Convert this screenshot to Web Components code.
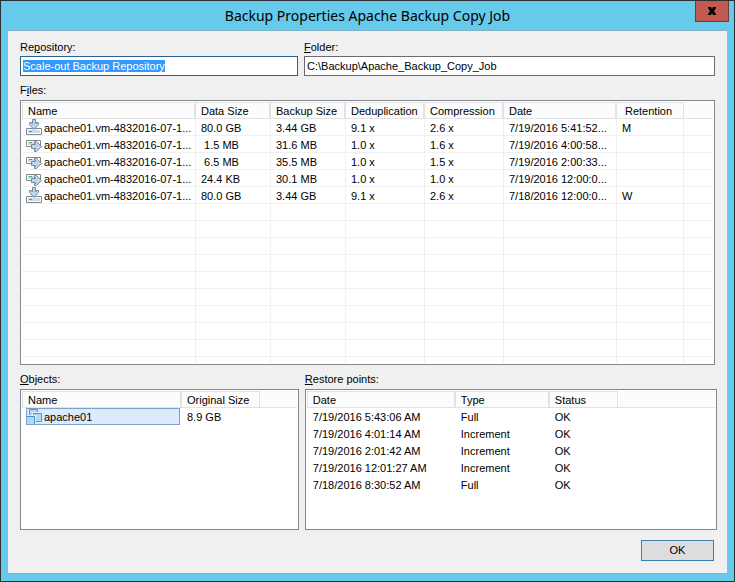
<!DOCTYPE html>
<html lang="en">
<head>
<meta charset="utf-8">
<title>Backup Properties Apache Backup Copy Job</title>
<style>
    body {
        margin: 0;
        font: 11px/13px "Liberation Sans", Arial, sans-serif;
        color: #000;
    }
</style>
</head>
<body>

<properties-dialog caption="Backup Properties Apache Backup Copy Job">
    <text-field slot="repository" label="Re&amp;pository:" value="Scale-out Backup Repository" active></text-field>
    <text-field slot="folder" label="&amp;Folder:" value="C:\Backup\Apache_Backup_Copy_Job"></text-field>
    <list-view slot="files" id="files" label="F&amp;iles:" grid></list-view>
    <list-view slot="objects" id="objects" label="&amp;Objects:"></list-view>
    <list-view slot="points" id="points" label="&amp;Restore points:"></list-view>
</properties-dialog>

<script>
// "&" marks the access key of a label
function accessLabel(text) {
    return text.replace(/&(.)/, '<u>$1</u>');
}

const ICONS = {
    full: `
        <path d="M.5 9.5h15v6H.5z" fill="#fff" stroke="#868686"/>
        <path d="M2 11h12v3H2z" fill="#c5dcf3"/>
        <path d="M3 12h3v1H3z" fill="#35b44a"/>
        <path d="M6.5.5h3v4h1v-1h2v2L8 10.5 3.5 5.5v-2h2v1h1z" fill="#b9d7f5" stroke="#7d8790"/>`,
    increment: `
        <path d="M.5 4.5h14v6H.5z" fill="#fff" stroke="#868686"/>
        <path d="M2 6h7v3H2z" fill="#c5dcf3"/>
        <path d="M3 6h3v1H3z" fill="#35b44a"/>
        <path d="M5.5 8.5h4v-1h-1v-2h2l5 5-5 5h-2v-2h1v-1h-4z" fill="#b9d7f5" stroke="#7d8790"/>`,
    machine: `
        <path d="M3.5.5h8v7h-8z" fill="#b9d7f0" stroke="#4f9bc6"/>
        <path d="M6 3h10v10H6z" fill="#deecfc"/>
        <path d="M7.5 4.5h8v8h-8z" fill="#b9d7f0" stroke="#4f9bc6"/>
        <path d="M0 6h10v10H0z" fill="#deecfc"/>
        <path d="M.5 7.5h8v8h-8z" fill="#b9d7f0" stroke="#3d93c4"/>`
};

/**
 * 16px icon of a list item
 */
class ItemIcon extends HTMLElement {
    constructor() {
        super();
        this.attachShadow({ mode: 'open' });
    }

    connectedCallback() {
        this.shadowRoot.innerHTML = `
            <style>
                :host {
                    display: block;
                    flex: none;
                    width: 16px;
                    height: 16px;
                }

                svg {
                    display: block;
                }
            </style>
            <svg width="16" height="16" viewBox="0 0 16 16" aria-hidden="true">${ICONS[this.getAttribute('name')]}</svg>
        `;
    }
}

/**
 * Read-only text box with its label above
 */
class TextField extends HTMLElement {
    constructor() {
        super();
        this.attachShadow({ mode: 'open' });
    }

    connectedCallback() {
        this.shadowRoot.innerHTML = `
            <style>
                :host {
                    display: block;
                }

                label {
                    display: block;
                    margin-bottom: 2px;
                }

                input {
                    display: block;
                    box-sizing: border-box;
                    width: 100%;
                    height: 20px;
                    padding: 0 2px;
                    border: 1px solid #6b6b70;
                    border-radius: 0;
                    outline: none;
                    background: #fff;
                    color: inherit;
                    font: inherit;
                }

                :host([active]) input {
                    border-color: #2c628b;
                }

                input::selection {
                    background: #3399ff;
                    color: #fff;
                }
            </style>
            <label for="box">${accessLabel(this.getAttribute('label'))}</label>
            <input id="box" type="text" readonly>
        `;

        const input = this.shadowRoot.getElementById('box');
        input.value = this.getAttribute('value');

        if (this.hasAttribute('active')) {
            input.focus();
            input.select();
        }
    }
}

/**
 * Report list: columns with a header, rows and optional grid lines
 */
class ListView extends HTMLElement {
    constructor() {
        super();
        this.attachShadow({ mode: 'open' });
    }

    setData(columns, rows) {
        this.columns = columns;
        this.rows = rows;
        this.render();
    }

    renderCell(row, text, index) {
        if (index === 0 && row.icon) {
            return `<td class="item"><div class="${row.selected ? 'selected' : ''}">
                <item-icon name="${row.icon}"></item-icon><span>${text}</span></div></td>`;
        }
        return `<td>${text}</td>`;
    }

    render() {
        const { columns, rows } = this;

        this.shadowRoot.innerHTML = `
            <style>
                :host {
                    display: flex;
                    flex-direction: column;
                    min-height: 0;
                }

                .label {
                    margin-bottom: 3px;
                }

                .frame {
                    flex: 1;
                    display: flex;
                    flex-direction: column;
                    min-height: 0;
                    padding: 1px;
                    border: 1px solid #828790;
                    background: #fff;
                    overflow: hidden;
                }

                table {
                    flex: 1;
                    width: 100%;
                    table-layout: fixed;
                    border-collapse: separate;
                    border-spacing: 0;
                }

                th, td {
                    box-sizing: border-box;
                    height: 17px;
                    padding: 2px 2px 0 5px;
                    font-weight: normal;
                    text-align: left;
                    white-space: nowrap;
                    overflow: hidden;
                    text-overflow: ellipsis;
                }

                th {
                    border: solid #e2e2e2;
                    border-width: 1px 2px 1px 0;
                    background: #fcfcfc;
                }

                th:first-child {
                    border-left-width: 1px;
                }

                td:first-child {
                    padding-left: 6px;
                }

                th.last {
                    border-right-width: 1px;
                }

                th.indent {
                    padding-left: 8px;
                }

                th.rest {
                    border-width: 0 0 1px;
                }

                :host([grid]) td {
                    border: solid #f0f0f0;
                    border-width: 0 1px 1px 0;
                }

                :host([grid]) td:last-child {
                    border-right: 0;
                }

                td.item:first-child {
                    padding: 0 2px 0 4px;
                }

                .item div {
                    display: flex;
                    align-items: center;
                    gap: 2px;
                    height: 16px;
                }

                .item span {
                    padding-top: 2px;
                    overflow: hidden;
                    text-overflow: ellipsis;
                }

                .item .selected {
                    box-sizing: border-box;
                    height: 17px;
                    outline: 1px solid #7da2ce;
                    outline-offset: -1px;
                    background: #dcebfc;
                }

                .filler td {
                    height: auto;
                }

                :host([grid]) .filler td {
                    border-bottom: 0;
                    background: repeating-linear-gradient(#fff 0 16px, #f0f0f0 16px 17px);
                }
            </style>

            <div class="label" id="label">${accessLabel(this.getAttribute('label'))}</div>
            <div class="frame">
                <table aria-labelledby="label">
                    <colgroup>
                        ${columns.map(c => `<col style="width: ${c.width}px">`).join('')}
                        <col>
                    </colgroup>
                    <thead>
                        <tr>
                            ${columns.map((c, i) => `<th scope="col" class="${i === columns.length - 1 ? 'last' : ''} ${c.indent ? 'indent' : ''}">${c.title}</th>`).join('')}
                            <th class="rest"></th>
                        </tr>
                    </thead>
                    <tbody>
                        ${rows.map(row => `<tr>${row.cells.map((text, i) => this.renderCell(row, text, i)).join('')}<td></td></tr>`).join('')}
                        <tr class="filler" aria-hidden="true">${'<td></td>'.repeat(columns.length + 1)}</tr>
                    </tbody>
                </table>
            </div>
        `;
    }
}

/**
 * Dialog window: caption bar, fields, lists and the OK button
 */
class PropertiesDialog extends HTMLElement {
    constructor() {
        super();
        this.attachShadow({ mode: 'open' });
    }

    connectedCallback() {
        this.shadowRoot.innerHTML = `
            <style>
                :host {
                    display: flex;
                    flex-direction: column;
                    box-sizing: border-box;
                    min-height: 100vh;
                    padding: 0 7px 7px;
                    border: 1px solid #2d3136;
                    background: #66caea;
                }

                header {
                    display: grid;
                    grid-template-columns: 1fr auto 1fr;
                    height: 29px;
                }

                h1 {
                    grid-column: 2;
                    margin: 0;
                    font: 14px/29px "Noto Sans", "Open Sans", sans-serif;
                }

                .close {
                    justify-self: end;
                    display: grid;
                    place-items: center;
                    width: 34px;
                    height: 21px;
                    margin-right: -2px;
                    padding: 0;
                    border: 1px solid #6f3c3c;
                    border-top: 0;
                    background: #c35a51;
                }

                main {
                    flex: 1;
                    display: flex;
                    flex-direction: column;
                    padding: 10px 10px 12px 12px;
                    border: solid #84b0c4;
                    border-width: 1px 0;
                    background: #f0f0f0;
                }

                .fields, .lists {
                    display: flex;
                    gap: 6px;
                }

                .fields {
                    margin: 0 2px 8px 0;
                }

                slot[name="repository"]::slotted(*), slot[name="objects"]::slotted(*) {
                    flex: 278 1 0;
                }

                slot[name="folder"]::slotted(*), slot[name="points"]::slotted(*) {
                    flex: 411 1 0;
                }

                .files {
                    flex: 281 1 0;
                    display: flex;
                    flex-direction: column;
                    margin: 0 2px 8px 0;
                }

                slot[name="files"]::slotted(*) {
                    flex: 1;
                }

                .lists {
                    flex: 157 1 0;
                }

                footer {
                    display: flex;
                    justify-content: flex-end;
                    margin: 10px 3px 0 0;
                }

                .ok {
                    width: 73px;
                    height: 21px;
                    padding: 0;
                    border: 1px solid #3c7fb1;
                    background: #dddddd;
                    color: inherit;
                    font: inherit;
                }
            </style>

            <header>
                <h1>${this.getAttribute('caption')}</h1>
                <button type="button" class="close" aria-label="Close">
                    <svg width="10" height="8" viewBox="0 0 10 8" aria-hidden="true">
                        <path d="M1 0h3l1 2 1-2h3v1L7 4l2 3v1H6L5 6 4 8H1V7l2-3-2-3z"/>
                    </svg>
                </button>
            </header>
            <main>
                <div class="fields">
                    <slot name="repository"></slot>
                    <slot name="folder"></slot>
                </div>
                <div class="files"><slot name="files"></slot></div>
                <div class="lists">
                    <slot name="objects"></slot>
                    <slot name="points"></slot>
                </div>
                <footer><button type="button" class="ok">OK</button></footer>
            </main>
        `;
    }
}

customElements.define('item-icon', ItemIcon);
customElements.define('list-view', ListView);
customElements.define('properties-dialog', PropertiesDialog);
customElements.define('text-field', TextField);

const fileName = 'apache01.vm-4832016-07-1...';

document.getElementById('files').setData([
    { title: 'Name', width: 174 },
    { title: 'Data Size', width: 75 },
    { title: 'Backup Size', width: 75 },
    { title: 'Deduplication', width: 79 },
    { title: 'Compression', width: 79 },
    { title: 'Date', width: 113 },
    { title: 'Retention', width: 67, indent: true }
], [
    { icon: 'full', cells: [fileName, '80.0 GB', '3.44 GB', '9.1 x', '2.6 x', '7/19/2016 5:41:52...', 'M'] },
    { icon: 'increment', cells: [fileName, '&nbsp;1.5 MB', '31.6 MB', '1.0 x', '1.6 x', '7/19/2016 4:00:58...', ''] },
    { icon: 'increment', cells: [fileName, '&nbsp;6.5 MB', '35.5 MB', '1.0 x', '1.5 x', '7/19/2016 2:00:33...', ''] },
    { icon: 'increment', cells: [fileName, '24.4 KB', '30.1 MB', '1.0 x', '1.0 x', '7/19/2016 12:00:0...', ''] },
    { icon: 'full', cells: [fileName, '80.0 GB', '3.44 GB', '9.1 x', '2.6 x', '7/18/2016 12:00:0...', 'W'] }
]);

document.getElementById('objects').setData([
    { title: 'Name', width: 160 },
    { title: 'Original Size', width: 78 }
], [
    { icon: 'machine', selected: true, cells: ['apache01', '8.9 GB'] }
]);

document.getElementById('points').setData([
    { title: 'Date', width: 149 },
    { title: 'Type', width: 94 },
    { title: 'Status', width: 68 }
], [
    { cells: ['7/19/2016 5:43:06 AM', 'Full', 'OK'] },
    { cells: ['7/19/2016 4:01:14 AM', 'Increment', 'OK'] },
    { cells: ['7/19/2016 2:01:42 AM', 'Increment', 'OK'] },
    { cells: ['7/19/2016 12:01:27 AM', 'Increment', 'OK'] },
    { cells: ['7/18/2016 8:30:52 AM', 'Full', 'OK'] }
]);
</script>
</body>
</html>
